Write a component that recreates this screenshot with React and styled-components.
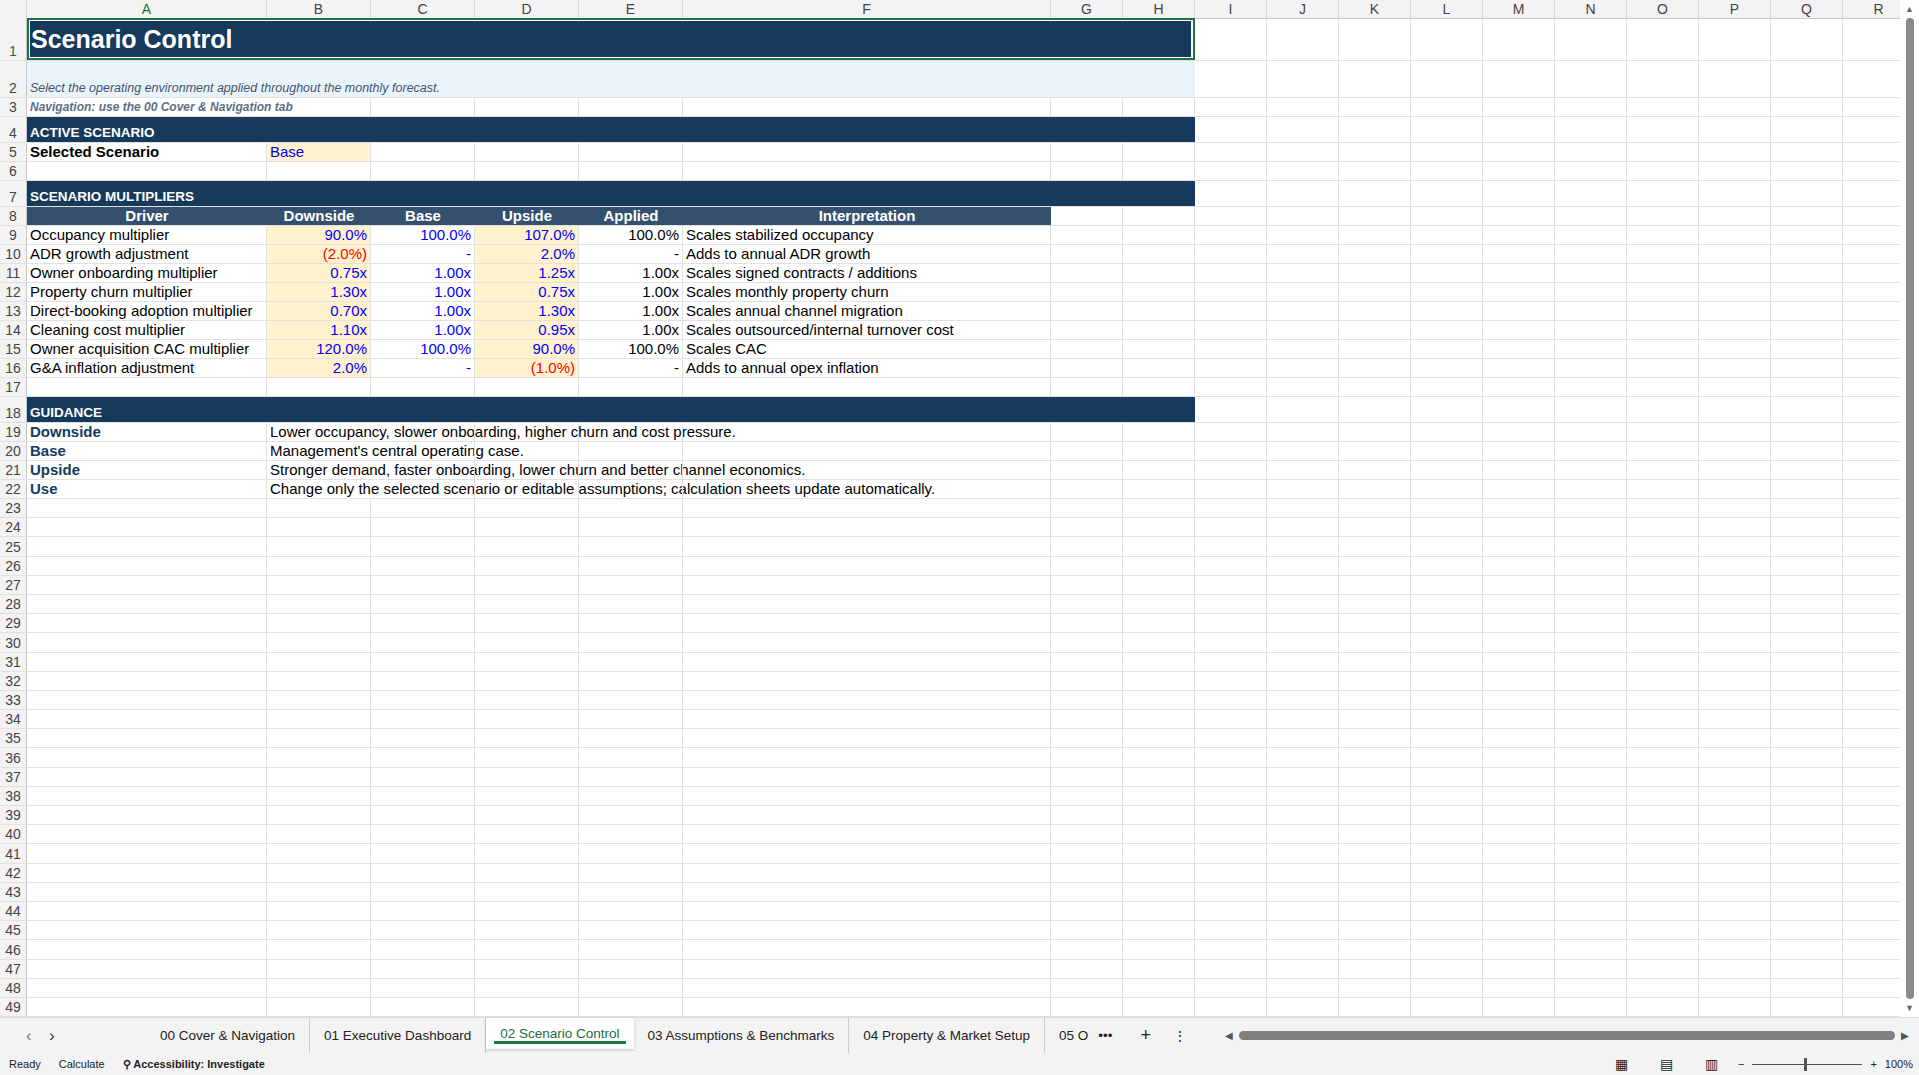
import React from "react";
import styled, { createGlobalStyle } from "styled-components";

const Global = createGlobalStyle`
  html, body { margin: 0; padding: 0; background: #fff; overflow: hidden; }
  body { font-family: "Liberation Sans", Arial, sans-serif; }
`;

const COLS = "27px 240px 104px 104px 104px 104px 368px 72px 72px repeat(10, 72px)";
const letters = ["A", "B", "C", "D", "E", "F", "G", "H", "I", "J", "K", "L", "M", "N", "O", "P", "Q", "R"];

const Page = styled.div`
  width: 1919px;
  height: 1075px;
  display: flex;
  flex-direction: column;
  overflow: hidden;
`;
const Body = styled.div`
  flex: 1;
  display: flex;
  overflow: hidden;
`;
const Grid = styled.div`
  flex: 1;
  overflow: hidden;
`;
const VScroll = styled.div`
  width: 19px;
  background: #fff;
  display: flex;
  flex-direction: column;
  align-items: center;
  padding: 4px 0;
  font-size: 9px;
  color: #666;
  gap: 4px;
  div { width: 8px; flex: 1; background: #8a8a8a; border-radius: 4px; }
`;
const Row = styled.div`
  display: grid;
  grid-template-columns: ${COLS};
  height: ${(p) => p.h || 19}px;
  border-bottom: 1px solid #e1e1e1;
  box-sizing: border-box;
`;
const ColHead = styled.div`
  background: #f3f3f3;
  color: #444;
  font-size: 14px;
  text-align: center;
  line-height: 18px;
  border-right: 1px solid #d8d8d8;
  border-bottom: 1px solid #c8c8c8;
  ${(p) => p.sel && "color:#1d6b3b;"}
`;
const RowNum = styled.div`
  background: #f3f3f3;
  color: #444;
  font-size: 14px;
  text-align: center;
  display: flex;
  align-items: flex-end;
  justify-content: center;
  padding-bottom: 1px;
  border-right: 1px solid #c8c8c8;
  box-sizing: border-box;
  ${(p) => p.sel && "color:#1d6b3b;"}
`;
const Cell = styled.div`
  grid-column: span ${(p) => p.span || 1};
  border-right: ${(p) => (p.nb ? "none" : "1px solid #e1e1e1")};
  background: ${(p) => p.bg || "transparent"};
  color: ${(p) => p.color || "#000"};
  font-size: ${(p) => p.size || 15}px;
  font-weight: ${(p) => (p.bold ? 700 : 400)};
  font-style: ${(p) => (p.italic ? "italic" : "normal")};
  text-align: ${(p) => p.align || "left"};
  padding: 0 3px;
  white-space: nowrap;
  overflow: visible;
  display: flex;
  align-items: flex-end;
  justify-content: ${(p) => (p.align === "right" ? "flex-end" : p.align === "center" ? "center" : "flex-start")};
  box-sizing: border-box;
  line-height: 18px;
  min-width: 0;
`;
const Title = styled(Cell)`
  background: #163a5c;
  color: #fff;
  font-size: 25px;
  align-items: center;
  padding-left: 4px;
  outline: 2px solid #1e7145;
  outline-offset: -2px;
  box-shadow: inset 0 0 0 3px #fff, inset 0 0 0 4px #163a5c;
`;
const Band = styled(Cell)`
  background: #163a5c;
  color: #fff;
  font-size: 13.5px;
  font-weight: 700;
  border-right: none;
`;
const Th = styled(Cell)`
  background: #34506e;
  color: #fff;
  font-weight: 700;
  justify-content: center;
  border-right: none;
`;
const Tabs = styled.div`
  height: 35px;
  background: #f3f3f3;
  display: flex;
  align-items: center;
  font-size: 13.5px;
  color: #222;
  border-top: 1px solid #ddd;
`;
const Tab = styled.div`
  padding: 0 14px;
  height: 100%;
  display: flex;
  align-items: center;
  border-right: 1px solid #ccc;
  ${(p) =>
    p.active &&
    `background:#fff; color:#1d6b3b; height:calc(100% - 4px); align-self:flex-start; position:relative; box-shadow:0 1px 3px rgba(0,0,0,.2); border:none;
     &:after{content:"";position:absolute;left:8px;right:8px;bottom:5px;height:3px;background:#1d7a3e;}`}
`;
const Nav = styled.div`
  width: 120px;
  display: flex;
  gap: 18px;
  padding-left: 26px;
  color: #777;
  font-size: 16px;
`;
const HScroll = styled.div`
  flex: 1;
  margin: 0 10px 0 30px;
  display: flex;
  align-items: center;
  gap: 6px;
  color: #555;
  font-size: 10px;
  div { flex: 1; height: 9px; background: #808080; border-radius: 5px; }
`;
const Status = styled.div`
  height: 22px;
  background: #f3f3f3;
  display: flex;
  align-items: center;
  font-size: 11px;
  color: #222;
  padding-left: 9px;
  gap: 18px;
`;
const Spacer = styled.div` flex: 1; `;
const Zoom = styled.div`
  display: flex;
  align-items: center;
  gap: 8px;
  padding-right: 6px;
  font-size: 11px;
`;
const Track = styled.div`
  width: 110px;
  height: 1px;
  background: #555;
  position: relative;
  &:after { content: ""; position: absolute; left: 52px; top: -6px; width: 3px; height: 13px; background: #555; }
`;

const Y = "#fff2cc";
const BLUE = "#0000ff";
const RED = "#ff0000";

const data = [
  ["Occupancy multiplier", "90.0%", "100.0%", "107.0%", "100.0%", "Scales stabilized occupancy"],
  ["ADR growth adjustment", "(2.0%)", "-", "2.0%", "-", "Adds to annual ADR growth"],
  ["Owner onboarding multiplier", "0.75x", "1.00x", "1.25x", "1.00x", "Scales signed contracts / additions"],
  ["Property churn multiplier", "1.30x", "1.00x", "0.75x", "1.00x", "Scales monthly property churn"],
  ["Direct-booking adoption multiplier", "0.70x", "1.00x", "1.30x", "1.00x", "Scales annual channel migration"],
  ["Cleaning cost multiplier", "1.10x", "1.00x", "0.95x", "1.00x", "Scales outsourced/internal turnover cost"],
  ["Owner acquisition CAC multiplier", "120.0%", "100.0%", "90.0%", "100.0%", "Scales CAC"],
  ["G&A inflation adjustment", "2.0%", "-", "(1.0%)", "-", "Adds to annual opex inflation"],
];

const guidance = [
  ["Downside", "Lower occupancy, slower onboarding, higher churn and cost pressure."],
  ["Base", "Management's central operating case."],
  ["Upside", "Stronger demand, faster onboarding, lower churn and better channel economics."],
  ["Use", "Change only the selected scenario or editable assumptions; calculation sheets update automatically."],
];

const Blank = ({ from = 0 }) =>
  letters.slice(from).map((l) => <Cell key={l} />);

const numColor = (v) => (v.startsWith("(") ? RED : BLUE);

export default function App() {
  return (
    <Page>
      <Global />
      <Body>
        <Grid>
          <Row h={18}>
            <ColHead />
            {letters.map((l) => (
              <ColHead key={l} sel={l === "A"}>{l}</ColHead>
            ))}
          </Row>
          <Row h={43}>
            <RowNum sel>1</RowNum>
            <Title span={8} bold>Scenario Control</Title>
            <Blank from={8} />
          </Row>
          <Row h={37}>
            <RowNum>2</RowNum>
            <Cell span={8} bg="#e9f3fa" italic color="#44546a" size={12.5} nb>
              Select the operating environment applied throughout the monthly forecast.
            </Cell>
            <Blank from={8} />
          </Row>
          <Row>
            <RowNum>3</RowNum>
            <Cell span={2} italic bold color="#5a6f86" size={12}>Navigation: use the 00 Cover &amp; Navigation tab</Cell>
            <Blank from={2} />
          </Row>
          <Row h={26}>
            <RowNum>4</RowNum>
            <Band span={8}>ACTIVE SCENARIO</Band>
            <Blank from={8} />
          </Row>
          <Row>
            <RowNum>5</RowNum>
            <Cell bold>Selected Scenario</Cell>
            <Cell bg={Y} color={BLUE}>Base</Cell>
            <Blank from={2} />
          </Row>
          <Row>
            <RowNum>6</RowNum>
            <Blank />
          </Row>
          <Row h={26}>
            <RowNum>7</RowNum>
            <Band span={8}>SCENARIO MULTIPLIERS</Band>
            <Blank from={8} />
          </Row>
          <Row>
            <RowNum>8</RowNum>
            {["Driver", "Downside", "Base", "Upside", "Applied", "Interpretation"].map((h) => (
              <Th key={h}>{h}</Th>
            ))}
            <Blank from={6} />
          </Row>
          {data.map((d, i) => (
            <Row key={d[0]}>
              <RowNum>{9 + i}</RowNum>
              <Cell>{d[0]}</Cell>
              <Cell bg={Y} align="right" color={numColor(d[1])}>{d[1]}</Cell>
              <Cell align="right" color={numColor(d[2])}>{d[2]}</Cell>
              <Cell bg={Y} align="right" color={numColor(d[3])}>{d[3]}</Cell>
              <Cell align="right">{d[4]}</Cell>
              <Cell>{d[5]}</Cell>
              <Blank from={6} />
            </Row>
          ))}
          <Row>
            <RowNum>17</RowNum>
            <Blank />
          </Row>
          <Row h={26}>
            <RowNum>18</RowNum>
            <Band span={8}>GUIDANCE</Band>
            <Blank from={8} />
          </Row>
          {guidance.map((g, i) => (
            <Row key={g[0]}>
              <RowNum>{19 + i}</RowNum>
              <Cell bold color="#163a5c">{g[0]}</Cell>
              <Cell nb>{g[1]}</Cell>
              <Blank from={2} />
            </Row>
          ))}
          {Array.from({ length: 27 }, (_, i) => (
            <Row key={i} h={19.2}>
              <RowNum>{23 + i}</RowNum>
              <Blank />
            </Row>
          ))}
        </Grid>
        <VScroll>
          ▲<div />▼
        </VScroll>
      </Body>
      <Tabs>
        <Nav>
          <span>‹</span>
          <span style={{ color: "#333" }}>›</span>
        </Nav>
        <Tab>00 Cover &amp; Navigation</Tab>
        <Tab>01 Executive Dashboard</Tab>
        <Tab active>02 Scenario Control</Tab>
        <Tab>03 Assumptions &amp; Benchmarks</Tab>
        <Tab>04 Property &amp; Market Setup</Tab>
        <Tab style={{ border: "none", paddingRight: 6 }}>05 O</Tab>
        <span style={{ padding: "0 14px 0 4px" }}>•••</span>
        <span style={{ fontSize: 18, padding: "0 14px" }}>+</span>
        <span style={{ padding: "0 8px" }}>⋮</span>
        <HScroll>
          ◀<div />▶
        </HScroll>
      </Tabs>
      <Status>
        <span>Ready</span>
        <span>Calculate</span>
        <span style={{ fontWeight: 700 }}>⚲ Accessibility: Investigate</span>
        <Spacer />
        <Zoom>
          <span style={{ fontSize: 14, padding: "0 12px" }}>▦</span>
          <span style={{ fontSize: 14, padding: "0 12px" }}>▤</span>
          <span style={{ fontSize: 14, padding: "0 12px" }}>▥</span>
          <span>−</span>
          <Track />
          <span>+</span>
          <span>100%</span>
        </Zoom>
      </Status>
    </Page>
  );
}
